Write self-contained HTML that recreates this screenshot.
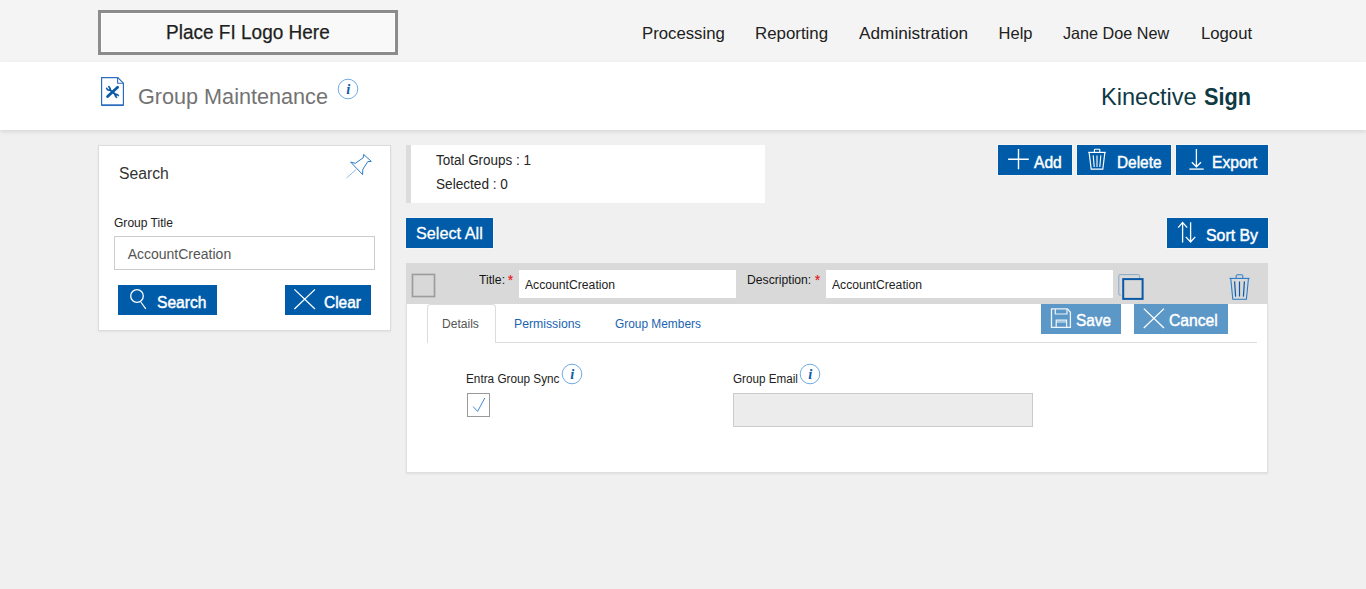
<!DOCTYPE html>
<html><head><meta charset="utf-8"><title>Group Maintenance</title>
<style>
html,body{margin:0;padding:0}
body{width:1366px;height:589px;overflow:hidden;background:#f0f0f0;font-family:"Liberation Sans",sans-serif;position:relative}
.a{position:absolute}
.t{position:absolute;white-space:nowrap;line-height:1;transform-origin:0 0}
</style></head><body>
<div class="a" style="left:0px;top:0px;width:1366px;height:62px;background:#f4f4f4"></div>
<div class="a" style="left:98px;top:10px;width:300px;height:45px;box-sizing:border-box;border:3px solid #8c8c8c;background:#f9f9f9;box-shadow:inset 0 0 0 1px #fff"></div>
<span class="t" style="left:165.88px;top:22.00px;font-size:20.5px;color:#1e1e1e;transform:scaleX(0.9271);-webkit-text-stroke:0.25px #1e1e1e;">Place FI Logo Here</span>
<span class="t" style="left:642.14px;top:25.00px;font-size:16.5px;color:#212121;transform:scaleX(1.0147);">Processing</span>
<span class="t" style="left:755.32px;top:25.00px;font-size:16.5px;color:#212121;transform:scaleX(1.0221);">Reporting</span>
<span class="t" style="left:858.50px;top:25.00px;font-size:16.5px;color:#212121;transform:scaleX(1.0431);">Administration</span>
<span class="t" style="left:998.60px;top:25.00px;font-size:16.5px;color:#212121;">Help</span>
<span class="t" style="left:1063.40px;top:25.00px;font-size:16.5px;color:#212121;transform:scaleX(0.9806);">Jane Doe New</span>
<span class="t" style="left:1200.52px;top:25.00px;font-size:16.5px;color:#212121;transform:scaleX(1.0115);">Logout</span>
<div class="a" style="left:0px;top:62px;width:1366px;height:68px;background:#fff;box-shadow:0 2px 4px rgba(0,0,0,0.10)"></div>
<svg class="a" style="left:96px;top:72px" width="32" height="40" viewBox="96 72 32 40">
<path d="M101.6 77.6 H117.8 L123.4 83.2 V105.2 H101.6 Z" fill="none" stroke="#2d6dc0" stroke-width="1.2"/>
<path d="M101.6 105.3 H123.4" stroke="#2d6dc0" stroke-width="1.5"/>
<path d="M117.6 77.8 V83.3 H123.2" fill="none" stroke="#2d6dc0" stroke-width="1.1"/>
<path d="M117.6 87.2 L107.6 96.6" stroke="#0a5aa8" stroke-width="2.8" stroke-linecap="round"/>
<path d="M109.6 89.4 L116.0 95.0" stroke="#0a5aa8" stroke-width="2" stroke-linecap="round"/>
<path d="M106.6 88.2 Q107.4 90.6 109.8 90.2 Q111.0 89.0 108.8 86.6" fill="none" stroke="#0a5aa8" stroke-width="1.6" stroke-linecap="round"/>
<path d="M118.4 95.6 Q117.4 93.8 115.4 94.4 Q114.6 96.0 116.6 97.4" fill="none" stroke="#0a5aa8" stroke-width="1.6" stroke-linecap="round"/>
</svg>
<span class="t" style="left:137.70px;top:87.00px;font-size:21.5px;color:#737373;transform:scaleX(1.0058);">Group Maintenance</span>
<svg class="a" style="left:336.7px;top:78.1px" width="22" height="22" viewBox="0 0 22 22"><circle cx="11" cy="11" r="9.8" fill="none" stroke="#5fa3e0" stroke-width="0.9"/><text x="11.2" y="16.0" text-anchor="middle" font-family="Liberation Serif" font-weight="bold" font-style="italic" font-size="14.5" fill="#0d5cab">i</text></svg>
<span class="t" style="left:1101.44px;top:85.00px;font-size:24px;color:#0e3a44;transform:scaleX(0.9815);">Kinective</span>
<span class="t" style="left:1203.70px;top:85.00px;font-size:24.5px;color:#0e3a44;font-weight:bold;transform:scaleX(0.8870);">Sign</span>
<div class="a" style="left:98px;top:145px;width:293px;height:186px;box-sizing:border-box;background:#fff;border:1px solid #dcdcdc;box-shadow:0 1px 2px rgba(0,0,0,0.06)"></div>
<span class="t" style="left:118.88px;top:166.00px;font-size:16px;color:#333;transform:scaleX(0.9822);">Search</span>
<svg class="a" style="left:344px;top:150px" width="32" height="32" viewBox="344 150 32 32">
<path d="M363.6 154.4 L371.3 161.4 L367.8 161.6 L362.8 169.4 L362.6 174.6 L350.6 162.0 L355.2 163.4 L363.2 157.8 Z" fill="none" stroke="#2a7bc8" stroke-width="1" stroke-linejoin="round"/>
<path d="M356.2 169.4 L346.4 178.2" stroke="#7aa8d8" stroke-width="0.8"/>
</svg>
<span class="t" style="left:114.32px;top:217.00px;font-size:12px;color:#222;transform:scaleX(1.0034);">Group Title</span>
<div class="a" style="left:114px;top:236px;width:261px;height:34px;box-sizing:border-box;background:#fff;border:1px solid #cccccc"></div>
<span class="t" style="left:127.68px;top:247.00px;font-size:14px;color:#555;">AccountCreation</span>
<div class="a" style="left:118px;top:285px;width:99px;height:30px;background:#005ca9"></div>
<svg class="a" style="left:126px;top:286px" width="24" height="26" viewBox="126 286 24 26">
<circle cx="137" cy="296" r="6.3" fill="none" stroke="#fff" stroke-width="1.3"/>
<path d="M140.8 302.0 L145.8 308.8" stroke="#fff" stroke-width="1.2"/>
</svg>
<span class="t" style="left:156.70px;top:295.00px;font-size:16px;color:#fff;transform:scaleX(0.9736);-webkit-text-stroke:0.45px #fff;">Search</span>
<div class="a" style="left:285px;top:285px;width:86px;height:30px;background:#005ca9"></div>
<svg class="a" style="left:290px;top:286px" width="28" height="26" viewBox="290 286 28 26">
<path d="M294.4 289.4 L315.0 309.0 M315.0 289.4 L294.4 309.0" stroke="#fff" stroke-width="1.3"/>
</svg>
<span class="t" style="left:323.96px;top:295.00px;font-size:16px;color:#fff;transform:scaleX(0.9660);-webkit-text-stroke:0.45px #fff;">Clear</span>
<div class="a" style="left:406px;top:145px;width:359px;height:58px;background:#fff;border-left:5px solid #dcdcdc;box-sizing:border-box"></div>
<span class="t" style="left:436.40px;top:153.00px;font-size:14px;color:#262626;transform:scaleX(0.9607);">Total Groups : 1</span>
<span class="t" style="left:435.60px;top:177.00px;font-size:14px;color:#262626;transform:scaleX(0.9729);">Selected : 0</span>
<div class="a" style="left:406px;top:218px;width:87px;height:30px;background:#005ca9;box-shadow:0 0 0 1px rgba(255,255,255,0.35)"></div>
<span class="t" style="left:415.60px;top:225.00px;font-size:16.5px;color:#fff;transform:scaleX(0.9838);-webkit-text-stroke:0.3px #fff;">Select All</span>
<div class="a" style="left:998px;top:145px;width:74px;height:30px;background:#005ca9;box-shadow:0 0 0 1px rgba(255,255,255,0.35)"></div>
<div class="a" style="left:1077px;top:145px;width:94px;height:30px;background:#005ca9;box-shadow:0 0 0 1px rgba(255,255,255,0.35)"></div>
<div class="a" style="left:1176px;top:145px;width:92px;height:30px;background:#005ca9;box-shadow:0 0 0 1px rgba(255,255,255,0.35)"></div>
<svg class="a" style="left:1004px;top:146px" width="30" height="28" viewBox="1004 146 30 28">
<path d="M1018.5 149 V169.2 M1008.1 159.3 H1028.8" stroke="#fff" stroke-width="1.4"/>
</svg>
<span class="t" style="left:1033.50px;top:155.00px;font-size:16px;color:#fff;transform:scaleX(0.9733);-webkit-text-stroke:0.45px #fff;">Add</span>
<svg class="a" style="left:1084px;top:146px" width="26" height="28" viewBox="1084 146 26 28">
<path d="M1088.2 152.4 H1105.8" stroke="#fff" stroke-width="1.2"/>
<path d="M1094.4 152.2 V149.8 Q1094.4 149.2 1095 149.2 H1099.2 Q1099.8 149.2 1099.8 149.8 V152.2" fill="none" stroke="#fff" stroke-width="1.1"/>
<path d="M1089.2 153 L1091.2 169.2 H1102.8 L1104.8 153" fill="none" stroke="#fff" stroke-width="1.2"/>
<path d="M1093.2 155.4 L1094.2 167 M1097 155.4 V167 M1100.8 155.4 L1099.8 167" stroke="#fff" stroke-width="1.1"/>
</svg>
<span class="t" style="left:1116.78px;top:155.00px;font-size:16px;color:#fff;transform:scaleX(0.9620);-webkit-text-stroke:0.45px #fff;">Delete</span>
<svg class="a" style="left:1184px;top:146px" width="24" height="28" viewBox="1184 146 24 28">
<path d="M1196.4 149 V166.4" stroke="#fff" stroke-width="1.3"/>
<path d="M1191.8 162.2 L1196.4 166.8 L1201 162.2" fill="none" stroke="#fff" stroke-width="1.3"/>
<path d="M1189.3 169.1 H1203.7" stroke="#fff" stroke-width="1.3"/>
</svg>
<span class="t" style="left:1212.14px;top:155.00px;font-size:16px;color:#fff;transform:scaleX(0.9762);-webkit-text-stroke:0.45px #fff;">Export</span>
<div class="a" style="left:1167px;top:218px;width:101px;height:30px;background:#005ca9;box-shadow:0 0 0 1px rgba(255,255,255,0.35)"></div>
<svg class="a" style="left:1174px;top:219px" width="28" height="28" viewBox="1174 219 28 28">
<path d="M1182.6 222.4 V242.4 M1178.2 227.6 L1182.6 222.4 L1187.2 227.6" fill="none" stroke="#fff" stroke-width="1.3"/>
<path d="M1190.6 222.2 V242 M1185.8 236.9 L1190.6 242 L1195.2 236.9" fill="none" stroke="#fff" stroke-width="1.3"/>
</svg>
<span class="t" style="left:1205.78px;top:228.00px;font-size:16px;color:#fff;transform:scaleX(0.9905);-webkit-text-stroke:0.45px #fff;">Sort By</span>
<div class="a" style="left:406px;top:263px;width:862px;height:41px;background:#d9d9d9"></div>
<div class="a" style="left:412px;top:274px;width:23px;height:23px;box-sizing:border-box;border:1px solid #9c9c9c;background:#d8d8d8;box-shadow:0 0 0 0.6px rgba(150,150,150,0.5), inset 0 0 0 0.6px rgba(150,150,150,0.5)"></div>
<span class="t" style="left:478.50px;top:274.00px;font-size:12.5px;color:#161616;transform:scaleX(0.9774);">Title:</span>
<span class="t" style="left:508.20px;top:273.00px;font-size:14px;color:#e8141c;transform:scaleX(0.9259);-webkit-text-stroke:0.2px #e8141c;">*</span>
<div class="a" style="left:519px;top:270px;width:217px;height:28px;background:#fff"></div>
<span class="t" style="left:524.94px;top:279.00px;font-size:12.5px;color:#222;transform:scaleX(0.9740);">AccountCreation</span>
<span class="t" style="left:746.88px;top:274.00px;font-size:12.5px;color:#161616;transform:scaleX(0.9736);">Description:</span>
<span class="t" style="left:815.20px;top:273.00px;font-size:14px;color:#e8141c;transform:scaleX(0.9259);-webkit-text-stroke:0.2px #e8141c;">*</span>
<div class="a" style="left:826px;top:270px;width:287px;height:28px;background:#fff"></div>
<span class="t" style="left:831.94px;top:279.00px;font-size:12.5px;color:#222;transform:scaleX(0.9740);">AccountCreation</span>
<svg class="a" style="left:1114px;top:270px" width="34" height="34" viewBox="1114 270 34 34">
<path d="M1120.8 295.0 H1119.8 Q1118.8 295.0 1118.8 294 V275.6 Q1118.8 274.6 1119.8 274.6 H1138.6 Q1139.6 274.6 1139.6 275.6 V278.4" fill="none" stroke="#88a9c6" stroke-width="1"/>
<rect x="1123.2" y="279.1" width="19.4" height="19.8" fill="none" stroke="#0a59a6" stroke-width="2"/>
</svg>
<svg class="a" style="left:1224px;top:270px" width="30" height="34" viewBox="1224 270 30 34">
<path d="M1229.4 278.4 H1249.6" stroke="#2a7bc8" stroke-width="1.1"/>
<path d="M1236.2 278.2 V275.6 Q1236.2 274.8 1237 274.8 H1242 Q1242.8 274.8 1242.8 275.6 V278.2" fill="none" stroke="#2a7bc8" stroke-width="1"/>
<path d="M1230.8 279 L1232.8 299.2 H1246.4 L1248.4 279" fill="none" stroke="#2a7bc8" stroke-width="1.1"/>
<path d="M1234.6 281.4 L1235.6 296.6 M1239.5 281.4 V296.6 M1244.4 281.4 L1243.4 296.6" stroke="#0a59a6" stroke-width="1.2"/>
</svg>
<div class="a" style="left:406px;top:304px;width:862px;height:169px;box-sizing:border-box;background:#fff;border:1px solid #e0e0e0;border-top:none;box-shadow:0 1px 2px rgba(0,0,0,0.08)"></div>
<div class="a" style="left:427px;top:342px;width:830px;height:1px;background:#dedede"></div>
<div class="a" style="left:427px;top:304px;width:69px;height:39px;box-sizing:border-box;background:#fff;border:1px solid #dcdcdc;border-bottom:none;border-radius:4px 4px 0 0"></div>
<span class="t" style="left:442.42px;top:318.00px;font-size:12.5px;color:#555;transform:scaleX(0.9660);">Details</span>
<span class="t" style="left:514.32px;top:318.00px;font-size:12.5px;color:#1a64b0;transform:scaleX(0.9797);">Permissions</span>
<span class="t" style="left:614.70px;top:318.00px;font-size:12.5px;color:#1a64b0;transform:scaleX(0.9513);">Group Members</span>
<div class="a" style="left:1041px;top:304px;width:80px;height:30px;background:#5b97c7"></div>
<svg class="a" style="left:1048px;top:306px" width="26" height="24" viewBox="1048 306 26 24">
<path d="M1051.5 308.9 H1067.4 L1070.4 312.2 V327.3 H1051.5 Z" fill="none" stroke="#eef4fa" stroke-width="1.3"/>
<path d="M1055.3 308.9 V314 H1067 V308.9" fill="none" stroke="#eef4fa" stroke-width="1.2"/>
<path d="M1056.2 327.3 V320.1 H1066.6 V327.3 M1056.2 322 H1066.6" fill="none" stroke="#eef4fa" stroke-width="1.2"/>
</svg>
<span class="t" style="left:1075.78px;top:313.00px;font-size:16px;color:#fff;transform:scaleX(0.9611);-webkit-text-stroke:0.45px #fff;">Save</span>
<div class="a" style="left:1134px;top:304px;width:94px;height:30px;background:#5b97c7"></div>
<svg class="a" style="left:1140px;top:306px" width="28" height="26" viewBox="1140 306 28 26">
<path d="M1143.8 308.6 L1164 328 M1164 308.6 L1143.8 328" stroke="#fff" stroke-width="1.3"/>
</svg>
<span class="t" style="left:1168.88px;top:313.00px;font-size:16px;color:#fff;transform:scaleX(0.9799);-webkit-text-stroke:0.45px #fff;">Cancel</span>
<span class="t" style="left:466.42px;top:373.00px;font-size:12.5px;color:#222;transform:scaleX(0.9410);">Entra Group Sync</span>
<svg class="a" style="left:560.8px;top:363.1px" width="22" height="22" viewBox="0 0 22 22"><circle cx="11" cy="11" r="9.8" fill="none" stroke="#5fa3e0" stroke-width="0.9"/><text x="11.2" y="16.0" text-anchor="middle" font-family="Liberation Serif" font-weight="bold" font-style="italic" font-size="14.5" fill="#0d5cab">i</text></svg>
<div class="a" style="left:467px;top:393px;width:23px;height:24px;box-sizing:border-box;border:1.5px solid #9a9a9a;background:#fff"></div>
<svg class="a" style="left:467px;top:393px" width="23" height="24" viewBox="467 393 23 24">
<path d="M473.1 406.6 L477.6 411.4 L484.8 398" fill="none" stroke="#3a80d0" stroke-width="0.95"/>
</svg>
<span class="t" style="left:733.24px;top:373.00px;font-size:12.5px;color:#222;transform:scaleX(0.9338);">Group Email</span>
<svg class="a" style="left:799.1px;top:363.1px" width="22" height="22" viewBox="0 0 22 22"><circle cx="11" cy="11" r="9.8" fill="none" stroke="#5fa3e0" stroke-width="0.9"/><text x="11.2" y="16.0" text-anchor="middle" font-family="Liberation Serif" font-weight="bold" font-style="italic" font-size="14.5" fill="#0d5cab">i</text></svg>
<div class="a" style="left:733px;top:393px;width:300px;height:34px;box-sizing:border-box;background:#ececec;border:1px solid #cbcbcb"></div>
</body></html>
